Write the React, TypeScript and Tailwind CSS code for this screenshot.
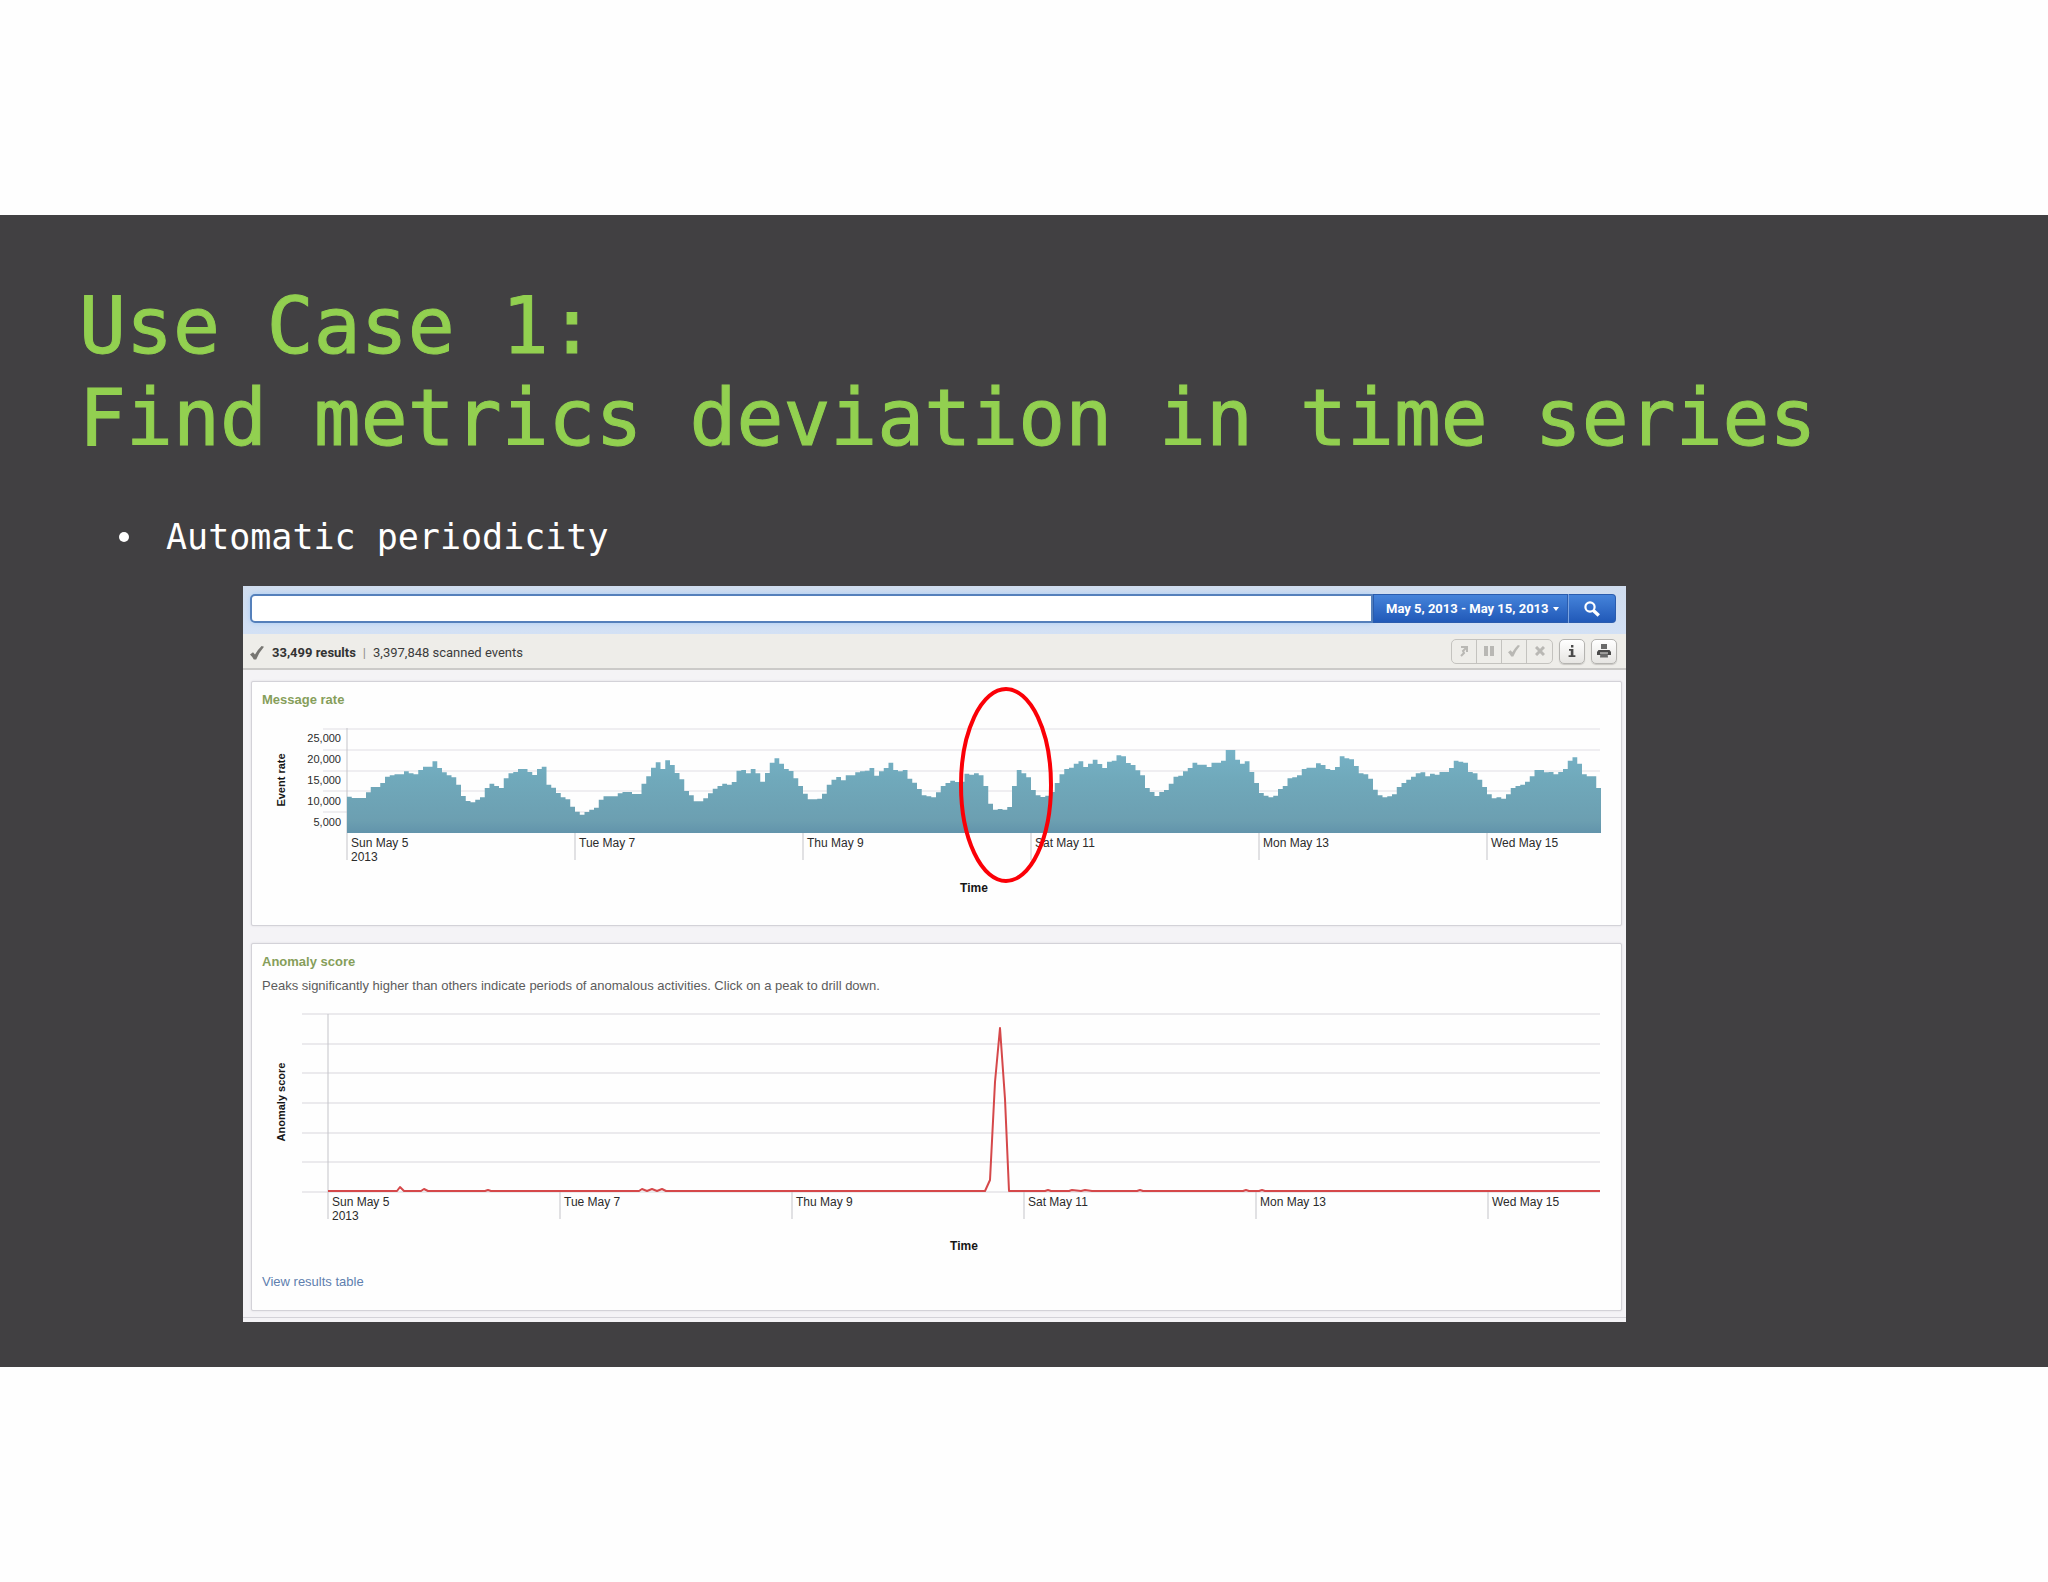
import React from "react";

// Hourly message rate, 24 values per day, one unit is 80 events
const RATES = [
  109, 105, 105, 105, 122, 138, 138, 150, 169, 173, 176, 176, 185, 179, 176, 189, 199, 199, 215, 195, 182, 173, 167, 145,
  111, 96, 92, 100, 107, 135, 148, 141, 135, 164, 179, 183, 192, 192, 183, 174, 192, 199, 145, 136, 120, 107, 101, 79,
  64, 55, 63, 70, 76, 100, 110, 110, 110, 119, 123, 123, 117, 117, 148, 170, 196, 212, 192, 218, 204, 180, 161, 126,
  113, 95, 95, 104, 119, 133, 141, 148, 145, 153, 187, 189, 179, 192, 179, 154, 180, 211, 224, 208, 192, 186, 164, 141,
  118, 101, 101, 103, 118, 145, 160, 168, 158, 173, 173, 182, 185, 187, 195, 172, 185, 195, 211, 189, 185, 189, 163, 151,
  132, 113, 110, 107, 122, 141, 150, 157, 153, 154, 178, 175, 179, 173, 141, 88, 70, 72, 70, 78, 141, 189, 179, 167,
  129, 113, 108, 112, 123, 150, 176, 192, 196, 208, 215, 198, 208, 220, 207, 195, 214, 217, 233, 230, 210, 204, 188, 173,
  135, 123, 111, 123, 129, 148, 169, 172, 185, 195, 211, 205, 205, 198, 211, 211, 217, 249, 249, 220, 208, 215, 183, 150,
  120, 112, 107, 112, 132, 141, 164, 167, 173, 192, 196, 196, 209, 204, 192, 189, 198, 230, 224, 221, 201, 179, 176, 163,
  130, 113, 107, 110, 116, 138, 150, 160, 169, 179, 182, 170, 178, 175, 183, 183, 195, 217, 214, 211, 183, 179, 160, 138,
  116, 104, 107, 103, 116, 135, 141, 145, 154, 170, 189, 189, 182, 183, 176, 183, 192, 217, 227, 208, 176, 170, 170, 135,
];

const DAYS = ["Sun May 5", "Tue May 7", "Thu May 9", "Sat May 11", "Mon May 13", "Wed May 15"];

const RATE_LABELS = ["25,000", "20,000", "15,000", "10,000", "5,000"];

// x, y of the score line; flat parts are left out
const SCORE_POINTS: [number, number][] = [
  [76, 189], [145, 189], [148, 185], [152, 189], [169, 189], [172, 187], [176, 189], [233, 189], [236, 188], [239, 189],
  [387, 189], [390, 187], [395, 189], [400, 187], [405, 189], [410, 187], [414, 189],
  [733, 189], [738, 178], [743, 80], [748, 26], [753, 97], [757, 189],
  [793, 189], [796, 188], [799, 189], [817, 189], [820, 188], [829, 189], [833, 188], [840, 189],
  [885, 189], [888, 188], [891, 189], [991, 189], [994, 188], [997, 189], [1007, 189], [1010, 188], [1013, 189], [1348, 189],
];

interface PanelProps {
  title: string;
  children: React.ReactNode;
}

function Panel({ title, children }: PanelProps) {
  return (
    <section className="rounded-xs border border-[#d3d2d8] bg-[#fefefe] pt-2 shadow-[0_0_2px_#d8d7dc]">
      <h2 className="px-[10px] text-[13px] leading-5 font-bold text-[#869e5a]">{title}</h2>
      {children}
    </section>
  );
}

interface TimeAxisProps {
  start: number;
  step: number;
  top: number;
}

function TimeAxis({ start, step, top }: TimeAxisProps) {
  return (
    <g>
      {DAYS.map((day, i) => (
        <g key={day}>
          <line x1={start + i * step} x2={start + i * step} y1={top} y2={top + 27} stroke="#c4c4c9" />
          <text x={start + 4 + i * step} y={top + 14} fontSize={12} fill="#2b2b2b">
            {day}
          </text>
        </g>
      ))}
      <text x={start + 4} y={top + 28} fontSize={12} fill="#2b2b2b">
        2013
      </text>
    </g>
  );
}

function MessageRateChart() {
  const barWidth = 4.75;
  const outline = RATES.map((rate, i) => `V${117 - rate / 3}H${95 + (i + 1) * barWidth}`).join("");

  return (
    <svg viewBox="0 0 1369 202" className="mt-[6px] block h-auto w-full overflow-visible" role="img" aria-label="Message rate">
      <defs>
        <linearGradient id="rate" gradientUnits="userSpaceOnUse" x1="0" y1="34" x2="0" y2="117">
          <stop offset="0" stopColor="#76b2c6" />
          <stop offset="0.35" stopColor="#70a9bb" />
          <stop offset="0.85" stopColor="#6c9fb1" />
          <stop offset="1" stopColor="#6294ab" />
        </linearGradient>
      </defs>
      {[13, 34, 55, 75, 96].map((y) => (
        <line key={y} x1="71" x2="1348" y1={y} y2={y} stroke="#efeef1" strokeWidth="2" />
      ))}
      <line x1="95" x2="95" y1="12" y2="117" stroke="#c4c4c9" />
      <path d={`M95 117${outline}V117Z`} fill="url(#rate)" />
      {RATE_LABELS.map((label, i) => (
        <text key={label} x="89" y={26 + i * 21} fontSize={11} textAnchor="end" fill="#2b2b2b">
          {label}
        </text>
      ))}
      <TimeAxis start={95} step={228} top={117} />
      <text x="29" y="64" fontSize={11} fontWeight="bold" textAnchor="middle" dominantBaseline="central" transform="rotate(-90 29 64)" fill="#161616">
        Event rate
      </text>
      <text x="722" y="176" fontSize={12} fontWeight="bold" textAnchor="middle" fill="#161616">
        Time
      </text>
      {/* Marks the dip of May 10 */}
      <ellipse cx="754" cy="69" rx="45" ry="96" fill="none" stroke="#fb0007" strokeWidth="4" />
    </svg>
  );
}

function AnomalyScoreChart() {
  return (
    <svg viewBox="0 0 1369 259" className="mt-[6px] block h-auto w-full" role="img" aria-label="Anomaly score">
      {[12, 42, 71, 101, 131, 160, 190].map((y) => (
        <line key={y} x1="50" x2="1348" y1={y} y2={y} stroke="#ebeaed" strokeWidth="2" />
      ))}
      <line x1="76" x2="76" y1="12" y2="190" stroke="#c4c4c9" />
      <TimeAxis start={76} step={232} top={190} />
      <polyline points={SCORE_POINTS.map((p) => p.join(",")).join(" ")} fill="none" stroke="#d5484a" strokeWidth="2" strokeLinejoin="round" />
      <text x="29" y="100" fontSize={11} fontWeight="bold" textAnchor="middle" dominantBaseline="central" transform="rotate(-90 29 100)" fill="#161616">
        Anomaly score
      </text>
      <text x="712" y="248" fontSize={12} fontWeight="bold" textAnchor="middle" fill="#161616">
        Time
      </text>
    </svg>
  );
}

function CheckIcon({ className }: { className: string }) {
  return (
    <svg viewBox="0 0 14 14" className={className} fill="currentColor" aria-hidden="true">
      <path d="M0 8.4 3 6.2 5 8.4Q8 3.4 11.6 0L14 0.8Q9 6.4 6.2 13.4L3.8 13.4Q2.2 10.4 0 8.4Z" />
    </svg>
  );
}

function SearchBar() {
  return (
    <form className="flex h-12 items-start bg-linear-to-b from-[#cfdcee] to-[#d3e1f5] pt-2 pr-[10px] pl-[7px] font-[Roboto,sans-serif]">
      <input
        type="text"
        aria-label="Search"
        className="h-[29px] min-w-0 flex-1 rounded-l-[5px] border-2 border-[#5580bb] bg-white px-2 text-[13px] shadow-[0_0_5px_#a8cdf6] outline-none"
      />
      <button
        type="button"
        className="flex h-[29px] w-[195px] items-center gap-1 border border-[#2a5cae] bg-linear-to-b from-[#4583da] to-[#2159b8] pl-3 text-[13px] font-bold whitespace-nowrap text-white"
      >
        May 5, 2013 - May 15, 2013
        <svg viewBox="0 0 6 4" className="h-1 w-[6px]" fill="currentColor" aria-hidden="true">
          <path d="M0 0H6L3 4Z" />
        </svg>
      </button>
      <button
        type="submit"
        aria-label="Run search"
        className="flex h-[29px] w-12 items-center justify-center rounded-r-[4px] border border-[#2a5cae] border-l-[#7ba4e2] bg-linear-to-b from-[#4583da] to-[#2159b8] text-white"
      >
        <svg viewBox="0 0 16 16" className="h-4 w-4" fill="none" stroke="currentColor" aria-hidden="true">
          <circle cx="6" cy="6" r="4.6" strokeWidth="2.2" />
          <path d="M9.4 9.4 14.8 14.4" strokeWidth="3.4" />
        </svg>
      </button>
    </form>
  );
}

function StatusBar() {
  const cell = "flex h-full w-[25px] items-center justify-center text-[#b9b8b4]";
  const tool = "flex h-[25px] w-[26px] items-center justify-center rounded-[5px] border border-[#b5b4b1] bg-linear-to-b from-white to-[#e6e5e2] text-[#4a4a4a] shadow-[0_1px_1px_#c9c8c4]";

  return (
    <div className="flex h-9 items-center border-b-2 border-[#cbcac8] bg-[#eeede9] pr-[9px] pl-[7px] font-[Roboto,sans-serif] text-[13px] text-[#3c3c3c]">
      <div className="flex items-center pt-1">
        <CheckIcon className="h-[14px] w-[14px] text-[#777672]" />
        <strong className="ml-2 text-[#333]">33,499 results</strong>
        <span className="mx-[7px] text-[#8f8e8b]">|</span>
        <span>3,397,848 scanned events</span>
      </div>

      <div className="ml-auto flex items-center gap-[6px]">
        <div className="flex h-[25px] divide-x divide-[#c4c3bf] rounded-[5px] border border-[#c4c3bf]">
          <button type="button" aria-label="Send to background" className={cell}>
            <svg viewBox="0 0 10 12" className="h-3 w-[10px]" fill="none" stroke="currentColor" strokeWidth="2" aria-hidden="true">
              <path d="M2 2H8V7M8 2 4 6 5 8 2 11" />
            </svg>
          </button>
          <button type="button" aria-label="Pause" className={cell}>
            <svg viewBox="0 0 10 10" className="h-[10px] w-[10px]" fill="currentColor" aria-hidden="true">
              <path d="M0 0H4V10H0ZM6 0H10V10H6Z" />
            </svg>
          </button>
          <button type="button" aria-label="Finalize" className={cell}>
            <CheckIcon className="h-3 w-3" />
          </button>
          <button type="button" aria-label="Cancel" className={cell}>
            <svg viewBox="0 0 10 10" className="h-[10px] w-[10px]" stroke="currentColor" strokeWidth="3" aria-hidden="true">
              <path d="M1 1 9 9M9 1 1 9" />
            </svg>
          </button>
        </div>
        <button type="button" aria-label="Inspect" className={tool}>
          <svg viewBox="0 0 8 12" className="h-3 w-2" fill="currentColor" aria-hidden="true">
            <path d="M3 0H5.4V2.4H3ZM1 4H5.4V10.2H7.4V12H0.6V10.2H2.8V5.8H1Z" />
          </svg>
        </button>
        <button type="button" aria-label="Print" className={tool}>
          <svg viewBox="0 0 14 14" className="h-[14px] w-[14px]" aria-hidden="true">
            <path d="M4 0H10V5H4Z" fill="#6a6a6a" />
            <path d="M1.5 6H12.5L14 8V11H0V8Z" fill="currentColor" />
            <path d="M3.4 9.4H10.6L11 13.4H3Z" fill="#6a6a6a" />
            <path d="M3 9H11" stroke="#e6e5e2" />
          </svg>
        </button>
      </div>
    </div>
  );
}

export default function App() {
  return (
    <div className="min-h-screen bg-[#fefefe] pt-[215px] pb-[215px]">
      <main className="bg-[#414042] pt-[65px] pb-[45px]">
        <h1 className="pl-[79px] font-['DejaVu_Sans_Mono',monospace] text-[78px] leading-[92px] text-[#92d050] [-webkit-text-stroke:1px_#92d050]">
          Use Case 1:
          <br />
          Find metrics deviation in time series
        </h1>

        <ul className="mt-[51px] pl-[119px] font-['DejaVu_Sans_Mono',monospace] text-[35px] leading-[44px] text-white">
          <li className="flex items-center">
            <span className="mr-[37px] h-[10px] w-[10px] rounded-full bg-white" />
            Automatic periodicity
          </li>
        </ul>

        {/* Search dashboard */}
        <div className="mt-[27px] mr-[422px] ml-[243px] bg-[#f4f3f6] font-['Liberation_Sans',Arial,sans-serif]">
          <SearchBar />
          <StatusBar />

          <div className="flex flex-col gap-[17px] border-b border-[#d3d2d8] pt-[11px] pr-1 pb-[6px] pl-2">
            <Panel title="Message rate">
              <MessageRateChart />
              <div className="h-[7px]" />
            </Panel>

            <Panel title="Anomaly score">
              <p className="mt-1 px-[10px] text-[13px] leading-5 text-[#5c5c5c]">
                Peaks significantly higher than others indicate periods of anomalous activities. Click on a peak to drill down.
              </p>
              <AnomalyScoreChart />
              <a href="#results" className="mt-[11px] mb-[18px] ml-[10px] inline-block text-[13px] leading-5 text-[#5f7fae]">
                View results table
              </a>
            </Panel>
          </div>
          <div className="h-1" />
        </div>
      </main>
    </div>
  );
}
